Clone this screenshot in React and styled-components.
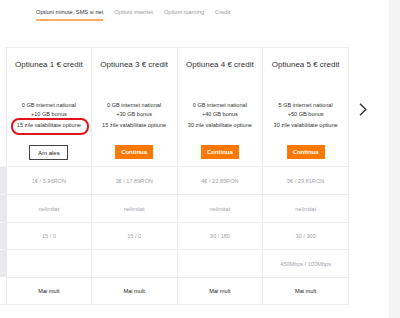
import React from 'react'
import styled, { createGlobalStyle } from 'styled-components'

const GlobalStyle = createGlobalStyle`
  html, body {
    margin: 0;
    padding: 0;
    background: #fff;
    font-family: "Liberation Sans", Arial, sans-serif;
  }
`

const plans = [
  {
    title: 'Optiunea 1 € credit',
    lines: ['0 GB internet national', '+10 GB bonus'],
    validity: '15 zile valabilitate optiune',
    chosen: true,
    price: '1€ / 5.96RON',
    minutes: 'nelimitat',
    sms: '15 / 0',
    speed: '',
  },
  {
    title: 'Optiunea 3 € credit',
    lines: ['0 GB internet national', '+30 GB bonus'],
    validity: '15 zile valabilitate optiune',
    price: '3€ / 17.89RON',
    minutes: 'nelimitat',
    sms: '15 / 0',
    speed: '',
  },
  {
    title: 'Optiunea 4 € credit',
    lines: ['0 GB internet national', '+40 GB bonus'],
    validity: '30 zile valabilitate optiune',
    price: '4€ / 23.85RON',
    minutes: 'nelimitat',
    sms: '30 / 180',
    speed: '',
  },
  {
    title: 'Optiunea 5 € credit',
    lines: ['5 GB internet national', '+50 GB bonus'],
    validity: '30 zile valabilitate optiune',
    price: '5€ / 29.81RON',
    minutes: 'nelimitat',
    sms: '30 / 300',
    speed: '450Mbps / 100Mbps',
  },
]

const rows = [
  { key: 'price', height: 28 },
  { key: 'minutes', height: 28 },
  { key: 'sms', height: 27 },
  { key: 'speed', height: 28 },
]

function App() {
  return (
    <Page>
      <GlobalStyle />
      <Main>
        <Tabs>
          <Tab active>Optiuni minute, SMS si net</Tab>
          <Tab>Optiuni internet</Tab>
          <Tab>Optiuni roaming</Tab>
          <Tab>Credit</Tab>
        </Tabs>

        <TableArea>
          <Table>
            <LabelCell />
            {plans.map((p, i) => (
              <HeaderCell key={p.title} first={i === 0}>
                <Title>{p.title}</Title>
                <Details>
                  {p.lines.map(l => <Line key={l}>{l}</Line>)}
                  <Validity>{p.validity}</Validity>
                </Details>
                {p.chosen ? <ChosenButton>Am ales</ChosenButton> : <ContinueButton>Continua</ContinueButton>}
                {p.chosen && <Highlight />}
              </HeaderCell>
            ))}

            {rows.map(r => (
              <React.Fragment key={r.key}>
                <LabelCell shaded h={r.height} />
                {plans.map((p, i) => (
                  <ValueCell key={i} h={r.height} first={i === 0}>{p[r.key]}</ValueCell>
                ))}
              </React.Fragment>
            ))}

            <LabelCell h={27} />
            {plans.map((p, i) => (
              <ValueCell key={i} h={27} first={i === 0} dark>Mai mult</ValueCell>
            ))}
          </Table>

          <NextArrow>
            <svg width="8" height="13" viewBox="0 0 8 13">
              <polyline points="1,0.8 6.8,6.5 1,12.2" fill="none" stroke="#2b2b33" strokeWidth="1.3" />
            </svg>
          </NextArrow>
        </TableArea>
      </Main>
      <SideStrip />
    </Page>
  )
}

export default App

const Page = styled.div`
  display: flex;
  width: 400px;
  height: 318px;
  overflow: hidden;
`

const Main = styled.div`
  width: 389px;
  display: flex;
  flex-direction: column;
`

const SideStrip = styled.div`
  width: 11px;
  background: #f4f4f4;
`

const Tabs = styled.div`
  display: flex;
  gap: 11px;
  padding: 8px 0 0 36px;
  height: 47px;
  box-sizing: border-box;
`

const Tab = styled.div`
  font-size: 5.7px;
  line-height: 8px;
  height: 13px;
  color: ${p => (p.active ? '#333' : '#9a9a9a')};
  border-bottom: ${p => (p.active ? '2px solid #ffab66' : '2px solid transparent')};
  box-sizing: border-box;
`

const TableArea = styled.div`
  display: flex;
  align-items: flex-start;
`

const Table = styled.div`
  display: grid;
  grid-template-columns: 6px repeat(4, 85.75px);
  border-bottom: 1px solid #ececec;
`

const LabelCell = styled.div`
  height: ${p => (p.h ? p.h + 'px' : '119px')};
  box-sizing: border-box;
  background: ${p => (p.shaded ? '#e9eaed' : '#fff')};
  border-top: ${p => (p.shaded ? '1px solid #f3f3f5' : 'none')};
`

const HeaderCell = styled.div`
  position: relative;
  height: 119px;
  box-sizing: border-box;
  border-top: 1px solid #ececec;
  border-right: 1px solid #ececec;
  border-left: ${p => (p.first ? '1px solid #ececec' : 'none')};
  display: flex;
  flex-direction: column;
  align-items: center;
  padding-top: 11px;
`

const Title = styled.div`
  font-size: 8px;
  line-height: 12px;
  color: #333;
`

const Details = styled.div`
  margin-top: 30px;
  display: flex;
  flex-direction: column;
  align-items: center;
  font-size: 5.6px;
  color: #333;
`

const Line = styled.div`
  line-height: 9px;
`

const Validity = styled.div`
  line-height: 9px;
  margin-top: 2px;
`

const ChosenButton = styled.div`
  margin-top: 15px;
  width: 39px;
  height: 15px;
  box-sizing: border-box;
  border: 1px solid #444;
  display: flex;
  align-items: center;
  justify-content: center;
  font-size: 6px;
  color: #222;
`

const ContinueButton = styled(ChosenButton)`
  width: 38px;
  height: 14px;
  border: none;
  background: #ff7900;
  color: #fff;
  font-weight: bold;
`

const Highlight = styled.div`
  position: absolute;
  left: 4px;
  top: 70px;
  width: 78px;
  height: 17px;
  box-sizing: border-box;
  border: 2px solid #e3141c;
  border-radius: 8px;
`

const ValueCell = styled.div`
  height: ${p => p.h}px;
  box-sizing: border-box;
  border-top: 1px solid #ececec;
  border-right: 1px solid #ececec;
  border-left: ${p => (p.first ? '1px solid #ececec' : 'none')};
  display: flex;
  align-items: center;
  justify-content: center;
  font-size: 5.6px;
  color: ${p => (p.dark ? '#222' : '#a3a4ab')};
`

const NextArrow = styled.div`
  margin: 56px 0 0 10px;
  display: flex;
`
